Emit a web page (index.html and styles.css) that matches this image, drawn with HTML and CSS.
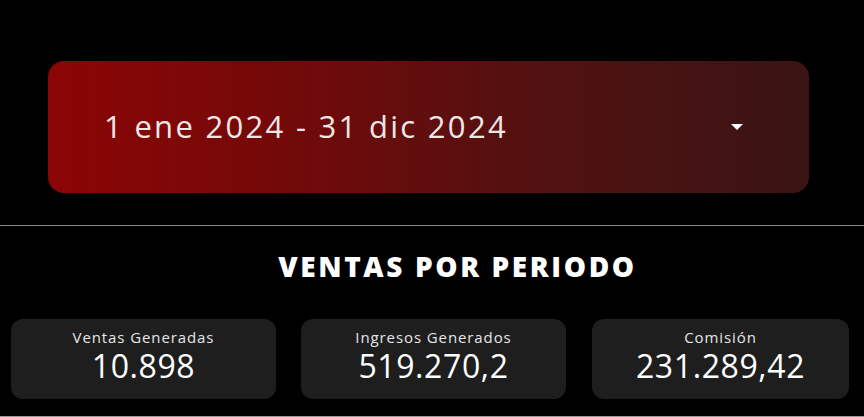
FILE: index.html
```html
<!DOCTYPE html>
<html lang="es">
<head>
<meta charset="utf-8">
<link rel="stylesheet" href="styles.css">
</head>
<body>
<div class="page">
  <div class="picker-wrap">
    <div class="picker">
      <span class="picker-text">1 ene 2024 - 31 dic 2024</span>
      <span class="caret"></span>
    </div>
  </div>
  <div class="divider"></div>
  <section class="summary">
    <h2 class="title">VENTAS POR PERIODO</h2>
    <div class="cards">
      <div class="card">
        <div class="card-label">Ventas Generadas</div>
        <div class="card-value">10.898</div>
      </div>
      <div class="card">
        <div class="card-label">Ingresos Generados</div>
        <div class="card-value">519.270,2</div>
      </div>
      <div class="card">
        <div class="card-label">Comisión</div>
        <div class="card-value">231.289,42</div>
      </div>
    </div>
  </section>
</div>
</body>
</html>
```
FILE: styles.css
```css
html, body {
  margin: 0;
  padding: 0;
  background: #000;
}
body {
  width: 864px;
  height: 417px;
  overflow: hidden;
  font-family: "Open Sans", "DejaVu Sans", sans-serif;
  color: #fff;
}
.page {
  height: 417px;
  display: flex;
  flex-direction: column;
}
.picker-wrap {
  padding: 61px 55px 0 48px;
}
.picker {
  height: 132px;
  border-radius: 16px;
  background: linear-gradient(90deg, #8c0505 0%, #740909 30%, #561010 60%, #441313 85%, #3a1414 100%);
  display: flex;
  align-items: center;
  justify-content: space-between;
  padding: 0 66px 0 56px;
}
.picker-text {
  font-size: 31px;
  letter-spacing: 2.3px;
  color: #f1e6e6;
  padding-bottom: 2px;
}
.caret {
  width: 0;
  height: 0;
  border-left: 6px solid transparent;
  border-right: 6px solid transparent;
  border-top: 6px solid #fff;
}
.divider {
  margin-top: 32px;
  height: 1px;
  background: #8c8c8c;
}
.summary {
  flex: 1;
  border-bottom: 1px solid #9a9a9a;
  display: flex;
  flex-direction: column;
}
.title {
  margin: 21px 0 0 0;
  padding-left: 51px;
  text-align: center;
  font-size: 28px;
  line-height: 38px;
  font-weight: 800;
  letter-spacing: 2.6px;
}
.cards {
  margin-top: 34px;
  padding-left: 11px;
  display: grid;
  grid-template-columns: 265px 265px 258px;
  column-gap: 25px;
}
.cards .card:nth-child(3) {
  margin-left: 1px;
}
.card {
  height: 80px;
  border-radius: 12px;
  background: #1e1e1e;
  box-sizing: border-box;
  padding-top: 9px;
  text-align: center;
}
.card-label {
  font-size: 15px;
  line-height: 18px;
  letter-spacing: 0.9px;
  color: #e6e6e6;
}
.card-value {
  margin-top: 3px;
  font-size: 32px;
  line-height: 34px;
  letter-spacing: 0.6px;
  color: #fff;
}
```
